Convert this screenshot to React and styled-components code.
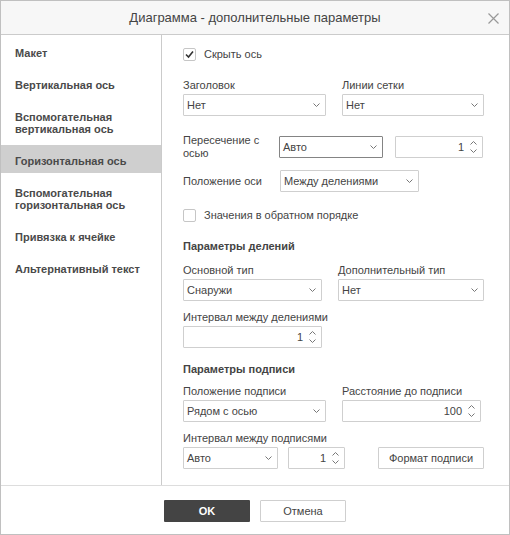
import React from "react";
import styled, { createGlobalStyle } from "styled-components";

const GlobalStyle = createGlobalStyle`
  body {
    margin: 0;
    font-family: "Liberation Sans", Arial, sans-serif;
    font-size: 11px;
    color: #444;
    background: #fff;
  }
`;

const navItems = [
  "Макет",
  "Вертикальная ось",
  "Вспомогательная вертикальная ось",
  "Горизонтальная ось",
  "Вспомогательная горизонтальная ось",
  "Привязка к ячейке",
  "Альтернативный текст",
];

function Chevron() {
  return (
    <svg width="7" height="4" viewBox="0 0 7 4">
      <path d="M0.5 0.5 L3.5 3.5 L6.5 0.5" stroke="#777" fill="none" />
    </svg>
  );
}

function Select({ value, w, focused }) {
  return (
    <SelectBox $w={w} $focused={focused}>
      <span>{value}</span>
      <Chevron />
    </SelectBox>
  );
}

function Spinner({ value, w }) {
  return (
    <SpinBox $w={w}>
      <span>{value}</span>
      <Arrows>
        <svg width="7" height="4" viewBox="0 0 7 4">
          <path d="M0.5 3.5 L3.5 0.5 L6.5 3.5" stroke="#777" fill="none" />
        </svg>
        <svg width="7" height="4" viewBox="0 0 7 4">
          <path d="M0.5 0.5 L3.5 3.5 L6.5 0.5" stroke="#777" fill="none" />
        </svg>
      </Arrows>
    </SpinBox>
  );
}

function Check({ checked, children, top }) {
  return (
    <CheckRow $top={top}>
      <Box>
        {checked && (
          <svg width="11" height="11" viewBox="0 0 11 11">
            <path d="M2 5.5 L4.5 8 L9 2.5" stroke="#333" strokeWidth="1.6" fill="none" />
          </svg>
        )}
      </Box>
      {children}
    </CheckRow>
  );
}

function Field({ label, children }) {
  return (
    <div>
      <Label>{label}</Label>
      {children}
    </div>
  );
}

export default function App() {
  return (
    <>
      <GlobalStyle />
      <Dialog>
        <Header>
          <span />
          <Title>Диаграмма - дополнительные параметры</Title>
          <Close>
            <svg width="11" height="11" viewBox="0 0 11 11">
              <path d="M0.5 0.5 L10.5 10.5 M10.5 0.5 L0.5 10.5" stroke="#999" strokeWidth="1.2" />
            </svg>
          </Close>
        </Header>
        <Body>
          <Sidebar>
            {navItems.map((item) => (
              <NavItem key={item} $active={item === "Горизонтальная ось"}>
                {item}
              </NavItem>
            ))}
          </Sidebar>
          <Content>
            <Check checked top={0}>Скрыть ось</Check>

            <Row $top={17} $cols="143px 142px" $gap={16}>
              <Field label="Заголовок">
                <Select value="Нет" />
              </Field>
              <Field label="Линии сетки">
                <Select value="Нет" />
              </Field>
            </Row>

            <InlineRow $top={18}>
              <SideLabel $w={96}>Пересечение с<br />осью</SideLabel>
              <Select value="Авто" w={104} focused />
              <Gap $w={12} />
              <Spinner value="1" w={88} />
            </InlineRow>

            <InlineRow $top={10}>
              <SideLabel $w={97}>Положение оси</SideLabel>
              <Select value="Между делениями" w={139} />
            </InlineRow>

            <Check top={16}>Значения в обратном порядке</Check>

            <Heading $top={17}>Параметры делений</Heading>
            <Row $top={10} $cols="139px 146px" $gap={16}>
              <Field label="Основной тип">
                <Select value="Снаружи" />
              </Field>
              <Field label="Дополнительный тип">
                <Select value="Нет" />
              </Field>
            </Row>
            <Row $top={9} $cols="139px" $gap={0}>
              <Field label="Интервал между делениями">
                <Spinner value="1" />
              </Field>
            </Row>

            <Heading $top={14}>Параметры подписи</Heading>
            <Row $top={8} $cols="143px 139px" $gap={16}>
              <Field label="Положение подписи">
                <Select value="Рядом с осью" />
              </Field>
              <Field label="Расстояние до подписи">
                <Spinner value="100" />
              </Field>
            </Row>
            <Label $top={9}>Интервал между подписями</Label>
            <InlineRow $top={0}>
              <Select value="Авто" w={95} />
              <Gap $w={10} />
              <Spinner value="1" w={57} />
              <Gap $w={33} />
              <PlainButton $w={106}>Формат подписи</PlainButton>
            </InlineRow>
          </Content>
        </Body>
        <Footer>
          <PrimaryButton>OK</PrimaryButton>
          <PlainButton $w={86}>Отмена</PlainButton>
        </Footer>
      </Dialog>
    </>
  );
}

const Dialog = styled.div`
  width: 510px;
  height: 535px;
  box-sizing: border-box;
  border: 1px solid #c0c0c0;
  display: flex;
  flex-direction: column;
  background: #fff;
`;

const Header = styled.div`
  height: 33px;
  flex: none;
  background: #f7f7f7;
  border-bottom: 1px solid #cbcbcb;
  display: grid;
  grid-template-columns: 40px 1fr 40px;
  align-items: center;
`;

const Title = styled.div`
  text-align: center;
  font-size: 13px;
  color: #444;
`;

const Close = styled.div`
  display: flex;
  justify-content: flex-end;
  padding-right: 10px;
  padding-top: 1px;
`;

const Body = styled.div`
  flex: 1;
  display: flex;
  min-height: 0;
`;

const Sidebar = styled.div`
  width: 160px;
  flex: none;
  border-right: 1px solid #cbcbcb;
  padding-top: 2px;
`;

const NavItem = styled.div`
  padding: 10px 8px 6px 14px;
  min-height: 12px;
  line-height: 12px;
  margin-bottom: 4px;
  font-weight: bold;
  color: #4a4a4a;
  background: ${(p) => (p.$active ? "#cfcfcf" : "transparent")};
`;

const Content = styled.div`
  flex: 1;
  padding: 12px 24px 0 21px;
`;

const CheckRow = styled.div`
  display: flex;
  align-items: center;
  gap: 8px;
  height: 14px;
  margin-top: ${(p) => p.$top}px;
`;

const Box = styled.div`
  width: 11px;
  height: 11px;
  border: 1px solid #c6c6c6;
  border-radius: 2px;
  display: flex;
  align-items: center;
  justify-content: center;
  background: #fff;
`;

const Row = styled.div`
  display: grid;
  grid-template-columns: ${(p) => p.$cols};
  column-gap: ${(p) => p.$gap}px;
  margin-top: ${(p) => p.$top}px;
`;

const InlineRow = styled.div`
  display: flex;
  align-items: center;
  margin-top: ${(p) => p.$top}px;
`;

const Gap = styled.div`
  width: ${(p) => p.$w}px;
  flex: none;
`;

const Label = styled.div`
  line-height: 14px;
  margin-bottom: 2px;
  margin-top: ${(p) => p.$top || 0}px;
  white-space: nowrap;
`;

const SideLabel = styled.div`
  width: ${(p) => p.$w}px;
  flex: none;
  line-height: 13px;
`;

const Heading = styled.div`
  font-weight: bold;
  line-height: 14px;
  margin-top: ${(p) => p.$top}px;
`;

const SelectBox = styled.div`
  box-sizing: border-box;
  width: ${(p) => (p.$w ? `${p.$w}px` : "100%")};
  height: 22px;
  border: 1px solid ${(p) => (p.$focused ? "#848484" : "#cfcfcf")};
  border-radius: 1px;
  display: flex;
  align-items: center;
  justify-content: space-between;
  padding: 0 5px 0 3px;
  background: #fff;
  flex: none;
`;

const SpinBox = styled(SelectBox)`
  border-color: #cfcfcf;
  justify-content: flex-end;
  gap: 6px;
  padding-right: 5px;
`;

const Arrows = styled.div`
  display: flex;
  flex-direction: column;
  gap: 4px;
`;

const PlainButton = styled.div`
  box-sizing: border-box;
  width: ${(p) => p.$w}px;
  height: 22px;
  border: 1px solid #cfcfcf;
  border-radius: 1px;
  display: flex;
  align-items: center;
  justify-content: center;
  background: #fff;
  color: #444;
  flex: none;
`;

const Footer = styled.div`
  height: 49px;
  flex: none;
  border-top: 1px solid #ddd;
  display: flex;
  justify-content: center;
  align-items: flex-start;
  gap: 10px;
  padding-top: 14px;
  box-sizing: border-box;
`;

const PrimaryButton = styled.div`
  width: 86px;
  height: 22px;
  background: #444;
  color: #fff;
  font-weight: bold;
  display: flex;
  align-items: center;
  justify-content: center;
  border-radius: 1px;
`;
